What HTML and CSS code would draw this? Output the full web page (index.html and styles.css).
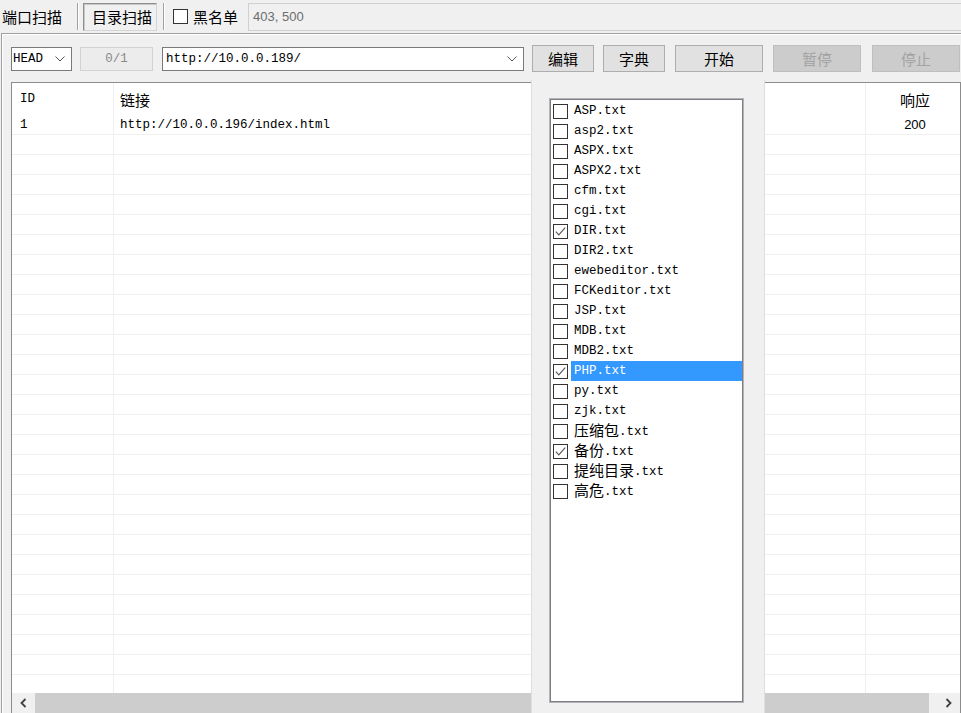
FILE: index.html
```html
<!DOCTYPE html>
<html lang="zh">
<head>
<meta charset="utf-8">
<title>目录扫描</title>
<link rel="stylesheet" href="styles.css">
</head>
<body>
<div class="topbar">
  <span class="tab-plain">端口扫描</span>
  <span class="sep"></span>
  <span class="tab-active">目录扫描</span>
  <span class="sep sep2"></span>
  <span class="cb top-cb"></span>
  <span class="tb-label">黑名单</span>
  <div class="codes">403, 500</div>
</div>

<div class="panel">
  <div class="toolbar">
    <div class="combo method"><span>HEAD</span><svg class="chev" width="10" height="6" viewBox="0 0 10 6"><path d="M0.5 0.5 L5 5 L9.5 0.5" fill="none" stroke="#555" stroke-width="1"/></svg></div>
    <div class="progress">0/1</div>
    <div class="combo url"><span>http://10.0.0.189/</span><svg class="chev" width="10" height="6" viewBox="0 0 10 6"><path d="M0.5 0.5 L5 5 L9.5 0.5" fill="none" stroke="#555" stroke-width="1"/></svg></div>
    <button class="btn b-edit">编辑</button>
    <button class="btn b-dict">字典</button>
    <button class="btn b-wide b-start">开始</button>
    <button class="btn b-wide b-pause disabled">暂停</button>
    <button class="btn b-wide b-stop disabled">停止</button>
  </div>

  <div class="table">
    <div class="row head">
      <div class="c1 mono">ID</div>
      <div class="c2">链接</div>
      <div class="c3">响应</div>
    </div>
    <div class="tbody">
      <div class="row"><div class="c1 mono">1</div><div class="c2 mono">http://10.0.0.196/index.html</div><div class="c3 num">200</div></div>
      <div class="row"><div class="c1"></div><div class="c2"></div><div class="c3"></div></div>
      <div class="row"><div class="c1"></div><div class="c2"></div><div class="c3"></div></div>
      <div class="row"><div class="c1"></div><div class="c2"></div><div class="c3"></div></div>
      <div class="row"><div class="c1"></div><div class="c2"></div><div class="c3"></div></div>
      <div class="row"><div class="c1"></div><div class="c2"></div><div class="c3"></div></div>
      <div class="row"><div class="c1"></div><div class="c2"></div><div class="c3"></div></div>
      <div class="row"><div class="c1"></div><div class="c2"></div><div class="c3"></div></div>
      <div class="row"><div class="c1"></div><div class="c2"></div><div class="c3"></div></div>
      <div class="row"><div class="c1"></div><div class="c2"></div><div class="c3"></div></div>
      <div class="row"><div class="c1"></div><div class="c2"></div><div class="c3"></div></div>
      <div class="row"><div class="c1"></div><div class="c2"></div><div class="c3"></div></div>
      <div class="row"><div class="c1"></div><div class="c2"></div><div class="c3"></div></div>
      <div class="row"><div class="c1"></div><div class="c2"></div><div class="c3"></div></div>
      <div class="row"><div class="c1"></div><div class="c2"></div><div class="c3"></div></div>
      <div class="row"><div class="c1"></div><div class="c2"></div><div class="c3"></div></div>
      <div class="row"><div class="c1"></div><div class="c2"></div><div class="c3"></div></div>
      <div class="row"><div class="c1"></div><div class="c2"></div><div class="c3"></div></div>
      <div class="row"><div class="c1"></div><div class="c2"></div><div class="c3"></div></div>
      <div class="row"><div class="c1"></div><div class="c2"></div><div class="c3"></div></div>
      <div class="row"><div class="c1"></div><div class="c2"></div><div class="c3"></div></div>
      <div class="row"><div class="c1"></div><div class="c2"></div><div class="c3"></div></div>
      <div class="row"><div class="c1"></div><div class="c2"></div><div class="c3"></div></div>
      <div class="row"><div class="c1"></div><div class="c2"></div><div class="c3"></div></div>
      <div class="row"><div class="c1"></div><div class="c2"></div><div class="c3"></div></div>
      <div class="row"><div class="c1"></div><div class="c2"></div><div class="c3"></div></div>
      <div class="row"><div class="c1"></div><div class="c2"></div><div class="c3"></div></div>
      <div class="row"><div class="c1"></div><div class="c2"></div><div class="c3"></div></div>
      <div class="row"><div class="c1"></div><div class="c2"></div><div class="c3"></div></div>
      <div class="row"><div class="c1"></div><div class="c2"></div><div class="c3"></div></div>
    </div>
    <div class="hscroll">
      <div class="sb-btn sb-left"><svg width="7" height="10" viewBox="0 0 7 10"><path d="M5.5 1 L1.5 5 L5.5 9" fill="none" stroke="#404040" stroke-width="1.8"/></svg></div>
      <div class="sb-thumb"></div>
      <div class="sb-btn sb-right"><svg width="7" height="10" viewBox="0 0 7 10"><path d="M1.5 1 L5.5 5 L1.5 9" fill="none" stroke="#404040" stroke-width="1.8"/></svg></div>
    </div>
  </div>
</div>

<div class="popup">
  <div class="listbox">
    <div class="item"><span class="cb"></span><span class="lbl">ASP.txt</span></div>
    <div class="item"><span class="cb"></span><span class="lbl">asp2.txt</span></div>
    <div class="item"><span class="cb"></span><span class="lbl">ASPX.txt</span></div>
    <div class="item"><span class="cb"></span><span class="lbl">ASPX2.txt</span></div>
    <div class="item"><span class="cb"></span><span class="lbl">cfm.txt</span></div>
    <div class="item"><span class="cb"></span><span class="lbl">cgi.txt</span></div>
    <div class="item"><span class="cb"><svg width="13" height="13" viewBox="0 0 13 13"><path d="M1.8 6.6 L4.8 9.8 L11.2 2.6" fill="none" stroke="#5a5a5a" stroke-width="1.2"/></svg></span><span class="lbl">DIR.txt</span></div>
    <div class="item"><span class="cb"></span><span class="lbl">DIR2.txt</span></div>
    <div class="item"><span class="cb"></span><span class="lbl">ewebeditor.txt</span></div>
    <div class="item"><span class="cb"></span><span class="lbl">FCKeditor.txt</span></div>
    <div class="item"><span class="cb"></span><span class="lbl">JSP.txt</span></div>
    <div class="item"><span class="cb"></span><span class="lbl">MDB.txt</span></div>
    <div class="item"><span class="cb"></span><span class="lbl">MDB2.txt</span></div>
    <div class="item sel"><span class="cb"><svg width="13" height="13" viewBox="0 0 13 13"><path d="M1.8 6.6 L4.8 9.8 L11.2 2.6" fill="none" stroke="#5a5a5a" stroke-width="1.2"/></svg></span><span class="lbl">PHP.txt</span></div>
    <div class="item"><span class="cb"></span><span class="lbl">py.txt</span></div>
    <div class="item"><span class="cb"></span><span class="lbl">zjk.txt</span></div>
    <div class="item"><span class="cb"></span><span class="lbl"><span class="cn">压缩包</span>.txt</span></div>
    <div class="item"><span class="cb"><svg width="13" height="13" viewBox="0 0 13 13"><path d="M1.8 6.6 L4.8 9.8 L11.2 2.6" fill="none" stroke="#5a5a5a" stroke-width="1.2"/></svg></span><span class="lbl"><span class="cn">备份</span>.txt</span></div>
    <div class="item"><span class="cb"></span><span class="lbl"><span class="cn">提纯目录</span>.txt</span></div>
    <div class="item"><span class="cb"></span><span class="lbl"><span class="cn">高危</span>.txt</span></div>
  </div>
</div>
</body>
</html>
```

FILE: styles.css
```css
* { box-sizing: border-box; }

html, body {
  margin: 0;
  overflow: hidden;
}

body {
  position: relative;
  width: 961px;
  height: 713px;
  background: #f0f0f0;
  font-family: "Noto Sans CJK SC", "Noto Sans", sans-serif;
  font-size: 15px;
  color: #000;
}

.mono {
  font-family: "Liberation Mono", "Noto Sans CJK SC", monospace;
  font-size: 12.5px;
}

.cn {
  font-family: "Noto Sans CJK SC", sans-serif;
  font-size: 15px;
  line-height: 18px;
  vertical-align: -1px;
}

/* ---------- top bar ---------- */
.topbar {
  display: flex;
  align-items: center;
  height: 33px;
  padding-left: 2px;
  line-height: 20px;
}

.tab-plain { width: 60px; }

.sep {
  width: 2px;
  height: 27px;
  margin-left: 15px;
  border-left: 1px solid #a0a0a0;
  border-right: 1px solid #ffffff;
}

.sep2 { margin-left: 6px; }

.tab-active {
  display: flex;
  align-items: center;
  margin-left: 4px;
  width: 74px;
  height: 28px;
  padding-left: 8px;
  border: 1px solid;
  border-color: #8f8f8f #d4d4d4 #d4d4d4 #8f8f8f;
  box-shadow: inset 1px 1px 0 #c8c8c8;
}

.cb {
  display: flex;
  align-items: center;
  justify-content: center;
  flex: none;
  width: 15px;
  height: 15px;
  background: #fff;
  border: 1px solid #333;
}

.top-cb { margin-left: 8px; }

.tb-label { margin-left: 5px; }

.codes {
  flex: 1;
  display: flex;
  align-items: center;
  margin-left: 10px;
  height: 28px;
  padding-left: 4px;
  border: 1px solid #d0d0d0;
  border-right: none;
  font-family: "Liberation Sans", sans-serif;
  font-size: 13px;
  color: #6d6d6d;
}

/* ---------- panel ---------- */
.panel {
  margin-left: 1px;
  padding: 10px 0 0 9px;
  border-top: 1px solid #a0a0a0;
  border-left: 1px solid #a0a0a0;
  box-shadow: inset 1px 1px 0 #ffffff;
}

.toolbar {
  display: flex;
  align-items: center;
  height: 29px;
}

.combo {
  display: flex;
  align-items: center;
  justify-content: space-between;
  height: 24px;
  background: #fff;
  border: 1px solid #7a7a7a;
  font-family: "Liberation Mono", monospace;
  font-size: 12.5px;
}

.method { width: 61px; padding: 0 6px 0 1px; }
.url { width: 362px; margin-left: 9px; padding: 0 6px 0 3px; }

.progress {
  display: flex;
  align-items: center;
  justify-content: center;
  width: 73px;
  height: 24px;
  margin-left: 8px;
  background: #ececec;
  border: 1px solid #d2d2d2;
  color: #8a8a8a;
  font-family: "Liberation Mono", monospace;
  font-size: 12.5px;
}

.btn {
  height: 27px;
  padding: 0;
  background: #e1e1e1;
  border: 1px solid #adadad;
  font-family: "Noto Sans CJK SC", sans-serif;
  font-size: 15px;
  color: #000;
}

.b-edit { width: 62px; margin-left: 8px; }
.b-dict { width: 62px; margin-left: 9px; }
.b-wide { width: 88px; }
.b-start { margin-left: 10px; }
.b-pause { margin-left: 10px; }
.b-stop { margin-left: 11px; }

.btn.disabled {
  background: #cccccc;
  border-color: #bfbfbf;
  color: #a3a3a3;
}

/* ---------- table ---------- */
.table {
  display: flex;
  flex-direction: column;
  margin-top: 9px;
  height: 631px;
  background: #fff;
  border-top: 1px solid #8c8c8c;
  border-left: 1px solid #8c8c8c;
  border-right: 1px solid #8c8c8c;
}

.row {
  display: grid;
  grid-template-columns: 102px 752px 1fr;
  height: 20px;
  border-bottom: 1px solid #efefef;
}

.row > div {
  display: flex;
  align-items: center;
  white-space: nowrap;
}

.c1 { padding-left: 8px; border-right: 1px solid #efefef; }
.c2 { padding-left: 6px; border-right: 1px solid #efefef; }
.c3 { justify-content: center; padding-left: 4px; }

.row.head {
  height: 32px;
  border-bottom: none;
}

.num {
  font-family: "Liberation Sans", sans-serif;
  font-size: 13px;
}

.tbody {
  height: 578px;
  overflow: hidden;
}

.hscroll {
  display: flex;
  height: 20px;
  background: #f0f0f0;
}

.sb-btn {
  display: flex;
  align-items: center;
  justify-content: center;
}

.sb-left { width: 23px; }
.sb-thumb { flex: 1; background: #cdcdcd; }
.sb-right { width: 31px; padding-left: 8px; }

/* ---------- dictionary popup ---------- */
.popup {
  position: absolute;
  left: 531px;
  top: 80px;
  width: 234px;
  height: 633px;
  background: #f0f0f0;
  border-left: 1px solid #dedede;
  border-right: 1px solid #dedede;
}

.listbox {
  margin: 19px 0 0 18px;
  width: 193px;
  height: 603px;
  padding-top: 1px;
  background: #fff;
  border: 1px solid #7d7d85;
  box-shadow: 0 0 0 1px #b4b4b8;
}

.item {
  display: flex;
  align-items: center;
  height: 20px;
  padding-left: 2px;
}

.lbl {
  display: block;
  flex: 1;
  height: 20px;
  line-height: 20px;
  margin-left: 3px;
  padding-left: 3px;
  font-family: "Liberation Mono", monospace;
  font-size: 12.5px;
  white-space: pre;
}

.item.sel .lbl {
  background: #3399ff;
  color: #fff;
}
```
